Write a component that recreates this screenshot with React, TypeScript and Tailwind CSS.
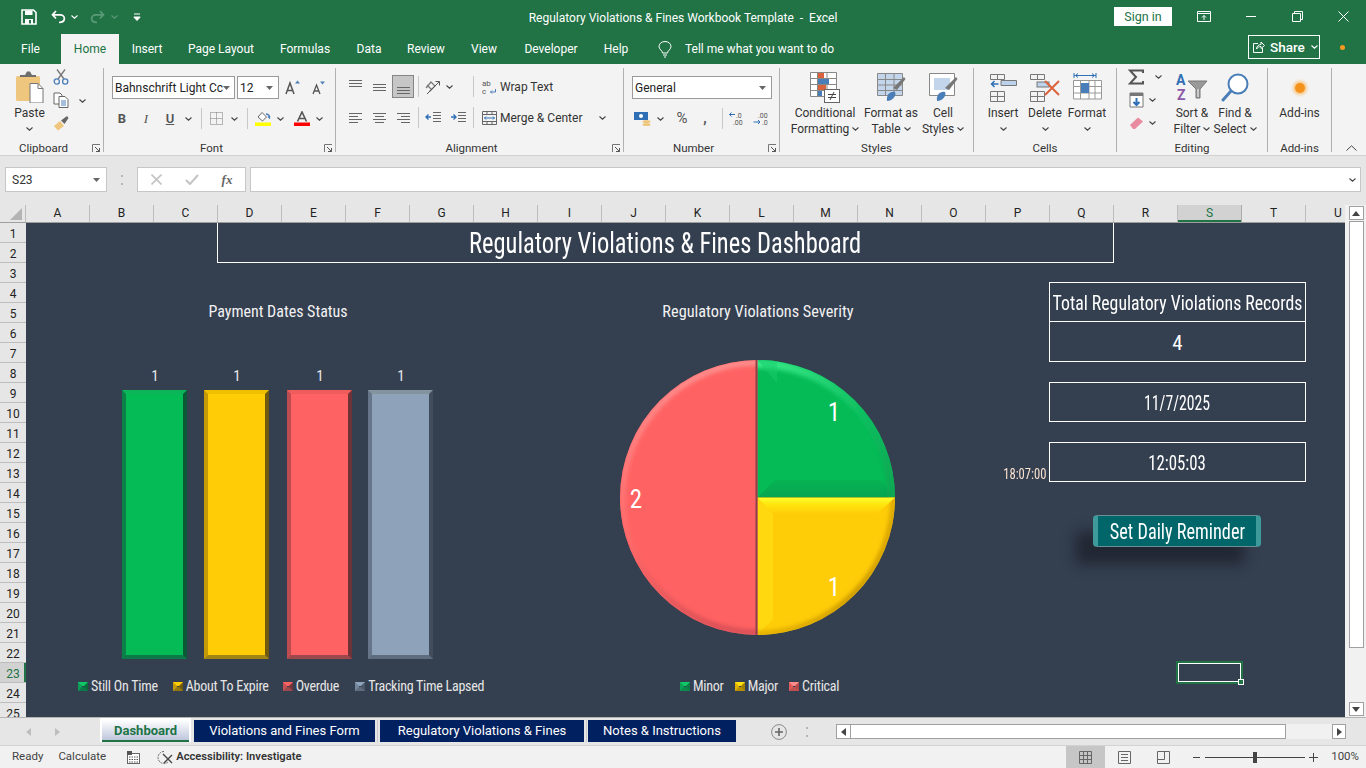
import type { ReactNode } from "react";

const chartFont = "font-['Roboto',sans-serif] [font-stretch:75%]";

const columns = "ABCDEFGHIJKLMNOPQRSTU".split("");
const rows = Array.from({ length: 25 }, (_, i) => i + 1);

const bars = [
  { bevel: "border-t-[#0cb55a] border-l-[#0b8048] border-r-[#0a5a36] border-b-[#0c7a47]", fill: "bg-[#05bb55]", gap: "ml-0" },
  { bevel: "border-t-[#f0c000] border-l-[#c49a06] border-r-[#6f5a10] border-b-[#a08414]", fill: "bg-[#ffcc05]", gap: "ml-[17px]" },
  { bevel: "border-t-[#f05c5c] border-l-[#bc4c50] border-r-[#6e3338] border-b-[#9c484c]", fill: "bg-[#ff6262]", gap: "ml-[18px]" },
  { bevel: "border-t-[#84949f] border-l-[#66758a] border-r-[#414d5c] border-b-[#5f6c7e]", fill: "bg-[#8ea2ba]", gap: "ml-[16px]" },
];

const barLegend = [
  { label: "Still On Time", marker: "border-t-[#10c868] border-l-[#0e9a58] border-r-[#0a6a3c] border-b-[#0b7a48]", gap: "mr-[15px]" },
  { label: "About To Expire", marker: "border-t-[#ffcc05] border-l-[#c49a06] border-r-[#6f5a10] border-b-[#94780f]", gap: "mr-[14px]" },
  { label: "Overdue", marker: "border-t-[#ff6262] border-l-[#c45056] border-r-[#70343a] border-b-[#9c484c]", gap: "mr-[16px]" },
  { label: "Tracking Time Lapsed", marker: "border-t-[#8ea2ba] border-l-[#748499] border-r-[#4a5666] border-b-[#5f6c7e]", gap: "mr-0" },
];

const pieLegend = [
  { label: "Minor", marker: "border-t-[#10c868] border-l-[#0ca055] border-r-[#0a7a44] border-b-[#0a8a4c]", gap: "mr-[11px]" },
  { label: "Major", marker: "border-t-[#ffe010] border-l-[#e0b000] border-r-[#a08000] border-b-[#b89000]", gap: "mr-[11px]" },
  { label: "Critical", marker: "border-t-[#ff8a8a] border-l-[#e05a5a] border-r-[#b04a4a] border-b-[#c05050]", gap: "mr-0" },
];

function Chev({ color = "#444" }: { color?: string }) {
  return (
    <svg width="7" height="4" viewBox="0 0 7 4" className="block shrink-0">
      <path d="M0.5 0.5 L3.5 3.2 L6.5 0.5" fill="none" stroke={color} strokeWidth="1.1" />
    </svg>
  );
}

function ComboArrow() {
  return (
    <svg width="7" height="4" viewBox="0 0 7 4" className="block shrink-0">
      <path d="M0 0 H7 L3.5 4 Z" fill="#666" />
    </svg>
  );
}

function Launcher() {
  return (
    <svg width="9" height="9" viewBox="0 0 9 9" className="absolute right-[2px] bottom-[-1px]">
      <path d="M0.5 8 V0.5 H8" fill="none" stroke="#777" />
      <path d="M3 3 L7.5 7.5 M7.5 4 V7.5 H4" fill="none" stroke="#555" />
    </svg>
  );
}

function VSep() {
  return <span className="block w-px h-[21px] bg-[#c8c8c8] shrink-0" />;
}

function Lines({ kind }: { kind: "left" | "center" | "right" }) {
  const short = kind === "left" ? "M1 5.5 H10 M1 11.5 H10" : kind === "center" ? "M3 5.5 H12 M3 11.5 H12" : "M5 5.5 H14 M5 11.5 H14";
  return (
    <svg width="15" height="14" viewBox="0 0 15 14" className="block">
      <path d={`M1 2.5 H14 M1 8.5 H14 ${short}`} stroke="#666" fill="none" />
    </svg>
  );
}

function Group({ w, label, labelPad = "", launcher, children }: { w: string; label: string; labelPad?: string; launcher?: boolean; children: ReactNode }) {
  return (
    <div className={`relative h-[84px] shrink-0 border-r border-[#b1b1b1] ${w}`}>
      <div className="h-[73px] flex flex-col">{children}</div>
      <div className={`text-center h-[14px] leading-[14px] text-[11.5px] text-[#333] ${labelPad}`}>{label}</div>
      {launcher && <Launcher />}
    </div>
  );
}

function LargeBtn({ w, icon, lines, chev }: { w: string; icon: ReactNode; lines: string[]; chev?: "inline" | "below" }) {
  return (
    <div className={`flex flex-col items-center shrink-0 ${w}`}>
      <div className="h-[37px] flex items-center justify-center pt-[2px]">{icon}</div>
      {lines.map((l, i) => (
        <div key={l} className="h-[16px] leading-[16px] flex items-center gap-[3px] whitespace-nowrap">
          {l}
          {chev === "inline" && i === lines.length - 1 && <Chev />}
        </div>
      ))}
      {chev === "below" && (
        <div className="h-[16px] flex items-center">
          <Chev />
        </div>
      )}
    </div>
  );
}

function Combo({ w, text }: { w: string; text: string }) {
  return (
    <div className={`h-[23px] bg-white border border-[#9a9a9a] flex items-center pl-[2px] pr-[5px] shrink-0 ${w}`}>
      <span className="flex-1 whitespace-nowrap text-[12px] text-[#222]">{text}</span>
      <ComboArrow />
    </div>
  );
}

function Marker({ colors }: { colors: string }) {
  return <span className={`block w-[10px] h-[9px] border-[4px] shrink-0 ${colors}`} />;
}

function PieChart() {
  const green = "M138.5 138.5 L138.5 1 A137.5 137.5 0 0 1 276 138.5 Z";
  const yellow = "M138.5 138.5 L276 138.5 A137.5 137.5 0 0 1 138.5 276 Z";
  const red = "M138.5 138.5 L138.5 276 A137.5 137.5 0 0 1 138.5 1 Z";
  return (
    <svg width="277" height="277" viewBox="0 0 277 277" className="block shrink-0">
      <defs>
        <clipPath id="cg"><path d={green} /></clipPath>
        <clipPath id="cy"><path d={yellow} /></clipPath>
        <clipPath id="cr"><path d={red} /></clipPath>
        <filter id="soft" x="-10%" y="-10%" width="120%" height="120%"><feGaussianBlur stdDeviation="2" /></filter>
        <linearGradient id="ga" gradientUnits="userSpaceOnUse" x1="150" y1="0" x2="276" y2="130">
          <stop offset="0" stopColor="#38ea88" />
          <stop offset="0.55" stopColor="#10c062" />
          <stop offset="1" stopColor="#08a652" />
        </linearGradient>
        <linearGradient id="gb" x1="0" y1="0" x2="0" y2="1">
          <stop offset="0" stopColor="#06b454" />
          <stop offset="1" stopColor="#07a450" />
        </linearGradient>
        <linearGradient id="ya" gradientUnits="userSpaceOnUse" x1="276" y1="138" x2="138" y2="276">
          <stop offset="0" stopColor="#d9a400" />
          <stop offset="0.5" stopColor="#c49200" />
          <stop offset="1" stopColor="#e2ae00" />
        </linearGradient>
        <linearGradient id="yb" x1="0" y1="0" x2="0" y2="1">
          <stop offset="0" stopColor="#ffff2c" />
          <stop offset="0.45" stopColor="#ffe40c" />
          <stop offset="1" stopColor="#ffcc08" />
        </linearGradient>
        <linearGradient id="ra" gradientUnits="userSpaceOnUse" x1="40" y1="20" x2="80" y2="270">
          <stop offset="0" stopColor="#ff9090" />
          <stop offset="0.6" stopColor="#ff6a6a" />
          <stop offset="1" stopColor="#d85056" />
        </linearGradient>
      </defs>
      <path d={green} fill="#05bb55" />
      <g clipPath="url(#cg)">
        <polygon points="138.5,138.5 156,121 262,121 276,138.5" fill="url(#gb)" />
        <circle cx="138.5" cy="138.5" r="134" fill="none" stroke="url(#ga)" strokeWidth="9" filter="url(#soft)" />
        <polygon points="138.5,1 158,1 158,24 156,22" fill="#18cc6c" opacity="0.5" />
      </g>
      <path d={yellow} fill="#ffcc08" />
      <g clipPath="url(#cy)">
        <polygon points="138.5,138.5 154,155 154,260 138.5,276" fill="#ffd810" />
        <circle cx="138.5" cy="138.5" r="136" fill="none" stroke="url(#ya)" strokeWidth="5" filter="url(#soft)" />
        <polygon points="138.5,138.5 276,138.5 258,155 154,155" fill="url(#yb)" />
      </g>
      <path d={red} fill="#ff6262" />
      <g clipPath="url(#cr)">
        <circle cx="138.5" cy="138.5" r="135" fill="none" stroke="url(#ra)" strokeWidth="6" filter="url(#soft)" />
        <rect x="136.5" y="0" width="2" height="277" fill="#8e4048" />
      </g>
      <g fill="#fff" fontSize="25" textAnchor="middle">
        <text x="215" y="62">1</text>
        <text x="215" y="237">1</text>
        <text x="17" y="149">2</text>
      </g>
    </svg>
  );
}

function TitleBar() {
  return (
    <div className="h-[33px] grid grid-cols-[1fr_auto_1fr] items-center text-white">
      <div className="flex items-center pl-[21px]">
        <svg width="16" height="16" viewBox="0 0 16 16" className="block">
          <path d="M1 1 H12.5 L15 3.5 V15 H1 Z" fill="none" stroke="#fff" strokeWidth="1.6" />
          <rect x="4" y="1.5" width="7.5" height="4.5" fill="#fff" />
          <rect x="4" y="10" width="8" height="5" fill="#fff" />
          <rect x="8" y="11" width="2" height="3.4" fill="#217346" />
        </svg>
        <svg width="15" height="14" viewBox="0 0 15 14" className="block ml-[14px]">
          <path d="M5 1 L1.5 4.8 L5 8.5 M2 4.8 H9 C15 4.8 15 12.5 8 12.5" fill="none" stroke="#fff" strokeWidth="1.7" />
        </svg>
        <span className="ml-[5px]"><Chev color="#fff" /></span>
        <svg width="15" height="14" viewBox="0 0 15 14" className="block ml-[12px]">
          <path d="M10 1 L13.5 4.8 L10 8.5 M13 4.8 H6 C0 4.8 0 12.5 7 12.5" fill="none" stroke="#5b9a78" strokeWidth="1.7" />
        </svg>
        <span className="ml-[6px]"><Chev color="#5b9a78" /></span>
        <svg width="8" height="8" viewBox="0 0 8 8" className="block ml-[15px]">
          <path d="M1 1 H7 M0.8 4 H7.2 L4 7.5 Z" stroke="#fff" fill="#fff" strokeWidth="1" />
        </svg>
      </div>
      <div className="text-[12px] whitespace-pre pt-[2px]">Regulatory Violations &amp; Fines Workbook Template  -  Excel</div>
      <div className="flex items-center justify-end">
        <div className="w-[58px] h-[19px] bg-white text-[#217346] text-[12.5px] leading-[19px] text-center">Sign in</div>
        <div className="ml-[8px] w-[48px] flex justify-center">
          <svg width="14" height="11" viewBox="0 0 14 11" className="block">
            <path d="M0.5 0.5 H13.5 V10.5 H0.5 Z M0.5 2.5 H13.5" fill="none" stroke="#fff" />
            <path d="M7 9 V4.5 M5 6.5 L7 4.5 L9 6.5" fill="none" stroke="#fff" />
          </svg>
        </div>
        <div className="w-[46px] flex justify-center">
          <span className="block w-[10px] h-px bg-white" />
        </div>
        <div className="w-[46px] flex justify-center">
          <svg width="11" height="11" viewBox="0 0 11 11" className="block">
            <path d="M0.5 2.5 H8.5 V10.5 H0.5 Z M2.5 2.5 V0.5 H10.5 V8.5 H8.5" fill="none" stroke="#fff" />
          </svg>
        </div>
        <div className="w-[46px] flex justify-center">
          <svg width="11" height="11" viewBox="0 0 11 11" className="block">
            <path d="M0.5 0.5 L10.5 10.5 M10.5 0.5 L0.5 10.5" stroke="#fff" />
          </svg>
        </div>
      </div>
    </div>
  );
}

const tabs = [
  { label: "File", w: "w-[61px]" },
  { label: "Home", w: "w-[58px]", active: true },
  { label: "Insert", w: "w-[56px]" },
  { label: "Page Layout", w: "w-[92px]" },
  { label: "Formulas", w: "w-[76px]" },
  { label: "Data", w: "w-[52px]" },
  { label: "Review", w: "w-[62px]" },
  { label: "View", w: "w-[54px]" },
  { label: "Developer", w: "w-[80px]" },
  { label: "Help", w: "w-[50px]" },
];

function TabRow() {
  return (
    <div className="h-[31px] flex items-end text-white text-[12px]">
      {tabs.map((t) => (
        <div key={t.label} className={`h-[30px] leading-[30px] text-center shrink-0 ${t.w} ${t.active ? "bg-[#f3f3f3] text-[#217346]" : ""}`}>
          {t.label}
        </div>
      ))}
      <div className="h-[30px] flex items-center ml-[17px]">
        <svg width="14" height="17" viewBox="0 0 14 17" className="block">
          <path d="M4.5 12 C4.5 9.5 1 8.5 1 5.5 A6 5 0 0 1 13 5.5 C13 8.5 9.5 9.5 9.5 12 Z M5 14 H9 M6 16 H8" fill="none" stroke="#fff" />
        </svg>
        <span className="ml-[13px]">Tell me what you want to do</span>
      </div>
      <div className="ml-auto flex items-center h-[31px] pb-[3px]">
        <div className="w-[72px] h-[24px] border border-white flex items-center pl-[4px] text-[13.5px] font-medium">
          <svg width="12" height="12" viewBox="0 0 12 12" className="block shrink-0">
            <path d="M5 2.5 H0.5 V11.5 H9.5 V7 M3.5 8 C3.5 5 6 3.5 8 3.5 V1 L11.5 4.5 L8 7.5 V5.5 C6 5.5 4.5 6.5 3.5 8 Z" fill="none" stroke="#fff" />
          </svg>
          <span className="ml-[5px]">Share</span>
          <span className="ml-[6px]"><Chev color="#fff" /></span>
        </div>
        <span className="block ml-[20px] mr-[21px] w-[5px] h-[5px] rounded-full bg-[#f59a1c]" />
      </div>
    </div>
  );
}

function ClipboardGroup() {
  return (
    <Group w="w-[104px]" label="Clipboard" labelPad="pr-[16px]" launcher>
      <div className="flex">
        <div className="w-[53px] pl-[6px] flex flex-col items-center shrink-0">
          <svg width="29" height="32" viewBox="0 0 29 32" className="block mt-[3px]">
            <rect x="1" y="5" width="24" height="25" rx="1.5" fill="#efc67e" />
            <path d="M5 6 V4 H10 L12 0.5 H15 L17 4 H21 V6 Z" fill="#6e6e6e" />
            <path d="M15 12.5 H23 L28 17.5 V32 H15 Z" fill="#fff" stroke="#777" />
            <path d="M23 12.5 V17.5 H28" fill="none" stroke="#777" />
          </svg>
          <div className="h-[16px] leading-[16px] mt-[2px]">Paste</div>
          <div className="h-[15px] flex items-center"><Chev /></div>
        </div>
        <div className="w-[16px] flex flex-col items-center gap-[7px] pt-[1px] shrink-0">
          <svg width="16" height="16" viewBox="0 0 16 16" className="block">
            <path d="M4 0.5 L11 10 M12 0.5 L5 10" stroke="#777" strokeWidth="1.3" />
            <circle cx="3.8" cy="12.5" r="2.6" fill="none" stroke="#4a7eb8" strokeWidth="1.3" />
            <circle cx="12.2" cy="12.5" r="2.6" fill="none" stroke="#4a7eb8" strokeWidth="1.3" />
          </svg>
          <svg width="16" height="16" viewBox="0 0 16 16" className="block">
            <path d="M1 1 H7 L9 3 V12 H1 Z" fill="#fff" stroke="#666" />
            <path d="M6 4.5 H12 L15 7.5 V15.5 H6 Z" fill="#fff" stroke="#666" />
            <path d="M8 9 H13 M8 11 H13 M8 13 H13" stroke="#4a7eb8" />
          </svg>
          <svg width="16" height="16" viewBox="0 0 16 16" className="block">
            <path d="M1 11 L7 6 L11 11 L5 15.5 Z" fill="#efc67e" />
            <path d="M8 5.5 L14 1 L15.5 3 L11.5 9 Z" fill="#666" />
          </svg>
        </div>
        <div className="ml-[10px] mt-[31px]"><Chev /></div>
      </div>
    </Group>
  );
}

function FontGroup() {
  return (
    <Group w="w-[232px]" label="Font" labelPad="pr-[16px]" launcher>
      <div className="flex items-center pl-[8px] mt-[8px] h-[23px]">
        <Combo w="w-[123px]" text="Bahnschrift Light Cc" />
        <Combo w="w-[42px] ml-[2px]" text="12" />
        <div className="w-[27px] flex justify-center">
          <svg width="15" height="15" viewBox="0 0 15 15" className="block">
            <path d="M1 14 L5 3 L9 14 M2.5 10.5 H7.5" fill="none" stroke="#555" strokeWidth="1.5" />
            <path d="M10 3.5 L12.5 0.5 L15 3.5 Z" fill="#4a7eb8" />
          </svg>
        </div>
        <div className="w-[24px] flex justify-center">
          <svg width="13" height="14" viewBox="0 0 13 14" className="block">
            <path d="M1 13 L4.5 4 L8 13 M2.2 10 H6.8" fill="none" stroke="#555" strokeWidth="1.3" />
            <path d="M8 0.5 L10.5 3.5 L13 0.5 Z" fill="#4a7eb8" />
          </svg>
        </div>
      </div>
      <div className="flex items-center pl-[6px] mt-[8px] h-[23px] text-[#555] text-[13px]">
        <span className="w-[24px] text-center font-bold">B</span>
        <span className="w-[24px] text-center italic font-['Liberation_Serif',serif]">I</span>
        <span className="w-[24px] text-center underline font-semibold">U</span>
        <span className="w-[12px] flex justify-center"><Chev /></span>
        <span className="w-[14px] flex justify-center"><VSep /></span>
        <span className="w-[17px] flex justify-center">
          <svg width="13" height="13" viewBox="0 0 13 13" className="block">
            <path d="M0.5 0.5 H12.5 V12.5 H0.5 Z M6.5 0.5 V12.5 M0.5 6.5 H12.5" fill="none" stroke="#777" strokeDasharray="1 1" />
          </svg>
        </span>
        <span className="w-[18px] flex justify-center"><Chev /></span>
        <span className="w-[8px] flex justify-center"><VSep /></span>
        <span className="w-[24px] flex justify-center">
          <svg width="16" height="15" viewBox="0 0 16 15" className="block">
            <path d="M3 6 L7 1.5 L11.5 6 L7.5 10 Z" fill="#fff" stroke="#666" />
            <path d="M11 3 C14 3.5 15 5 14.5 7 L13 5.5" fill="none" stroke="#4a7eb8" strokeWidth="1.3" />
            <rect x="0" y="11.5" width="16" height="3.5" fill="#ffff00" />
          </svg>
        </span>
        <span className="w-[10px] flex justify-center"><Chev /></span>
        <span className="ml-[6px] w-[22px] flex justify-center">
          <svg width="16" height="15" viewBox="0 0 16 15" className="block">
            <path d="M3.5 10.5 L8 1 L12.5 10.5 M5 7.5 H11" fill="none" stroke="#555" strokeWidth="1.6" />
            <rect x="0" y="11.5" width="16" height="3.5" fill="#ff0000" />
          </svg>
        </span>
        <span className="w-[12px] flex justify-center"><Chev /></span>
      </div>
    </Group>
  );
}

function AlignmentGroup() {
  return (
    <Group w="w-[288px]" label="Alignment" labelPad="pr-[16px]" launcher>
      <div className="flex items-center pl-[7px] mt-[7px] h-[23px]">
        <span className="w-[24px] flex justify-center">
          <svg width="15" height="8" viewBox="0 0 15 8" className="block mb-[8px]"><path d="M1 1.5 H14 M1 4.5 H14 M1 7.5 H14" stroke="#666" /></svg>
        </span>
        <span className="w-[24px] flex justify-center">
          <svg width="15" height="8" viewBox="0 0 15 8" className="block"><path d="M1 1.5 H14 M1 4.5 H14 M1 7.5 H14" stroke="#666" /></svg>
        </span>
        <span className="w-[22px] ml-[1px] mr-[1px] h-[23px] flex justify-center items-end pb-[3px] bg-[#c6c6c6] border border-[#858585]">
          <svg width="15" height="8" viewBox="0 0 15 8" className="block"><path d="M1 1.5 H14 M1 4.5 H14 M1 7.5 H14" stroke="#666" /></svg>
        </span>
        <span className="w-[6px] flex justify-center"><VSep /></span>
        <span className="w-[23px] flex justify-center">
          <svg width="17" height="16" viewBox="0 0 17 16" className="block">
            <path d="M2 9 L7 3 L11 7 L5.5 12.5 M3 6 L8 11" fill="none" stroke="#777" strokeWidth="1.2" />
            <path d="M3 15 L15 3 M11.5 2.5 H15.5 V6.5" fill="none" stroke="#555" />
          </svg>
        </span>
        <span className="w-[10px] flex justify-center"><Chev /></span>
        <span className="ml-[19px]"><VSep /></span>
        <span className="ml-[8px] w-[15px] flex justify-center">
          <svg width="15" height="16" viewBox="0 0 15 16" className="block">
            <text x="0" y="7" fontSize="8" fill="#555">ab</text>
            <text x="0" y="15" fontSize="8" fill="#555">c</text>
            <path d="M13.5 10 V13 H8.5 M10 11.5 L8.5 13 L10 14.5" fill="none" stroke="#4a7eb8" />
          </svg>
        </span>
        <span className="ml-[3px] whitespace-nowrap">Wrap Text</span>
      </div>
      <div className="flex items-center pl-[7px] mt-[8px] h-[23px]">
        <span className="w-[24px] flex justify-center"><Lines kind="left" /></span>
        <span className="w-[24px] flex justify-center"><Lines kind="center" /></span>
        <span className="w-[24px] flex justify-center"><Lines kind="right" /></span>
        <span className="w-[6px] flex justify-center"><VSep /></span>
        <span className="w-[24px] flex justify-center">
          <svg width="16" height="13" viewBox="0 0 16 13" className="block">
            <path d="M8 1.5 H16 M8 4.5 H16 M8 7.5 H16 M8 10.5 H16" stroke="#666" />
            <path d="M6 6 H1 M3.5 3.5 L1 6 L3.5 8.5" fill="none" stroke="#2f6fb5" strokeWidth="1.4" />
          </svg>
        </span>
        <span className="w-[25px] flex justify-center">
          <svg width="16" height="13" viewBox="0 0 16 13" className="block">
            <path d="M8 1.5 H16 M8 4.5 H16 M8 7.5 H16 M8 10.5 H16" stroke="#666" />
            <path d="M1 6 H6 M3.5 3.5 L6 6 L3.5 8.5" fill="none" stroke="#2f6fb5" strokeWidth="1.4" />
          </svg>
        </span>
        <span className="ml-[3px]"><VSep /></span>
        <span className="ml-[7px] w-[16px] flex justify-center">
          <svg width="15" height="14" viewBox="0 0 15 14" className="block">
            <path d="M0.5 0.5 H14.5 V13.5 H0.5 Z M0.5 3.5 H14.5 M0.5 10.5 H14.5 M5 0.5 V3.5 M10 0.5 V3.5 M5 10.5 V13.5 M10 10.5 V13.5" fill="none" stroke="#666" />
            <path d="M2.5 7 H12.5 M4 5.5 L2.5 7 L4 8.5 M11 5.5 L12.5 7 L11 8.5" fill="none" stroke="#2f6fb5" />
          </svg>
        </span>
        <span className="ml-[3px] w-[85px] whitespace-nowrap">Merge &amp; Center</span>
        <span className="ml-[14px]"><Chev /></span>
      </div>
    </Group>
  );
}

function NumberGroup() {
  return (
    <Group w="w-[156px]" label="Number" labelPad="pr-[16px]" launcher>
      <div className="flex items-center pl-[8px] mt-[8px] h-[23px]">
        <Combo w="w-[140px]" text="General" />
      </div>
      <div className="flex items-center pl-[8px] mt-[8px] h-[23px] text-[#555]">
        <span className="w-[20px] flex justify-center">
          <svg width="17" height="16" viewBox="0 0 17 16" className="block">
            <rect x="0" y="1" width="14" height="8" fill="#2f6fb5" />
            <circle cx="7" cy="5" r="2" fill="#fff" />
            <ellipse cx="12.5" cy="10.5" rx="4" ry="1.6" fill="#efc67e" />
            <ellipse cx="12.5" cy="13.5" rx="4" ry="1.6" fill="#efc67e" />
          </svg>
        </span>
        <span className="w-[16px] flex justify-center"><Chev /></span>
        <span className="ml-[2px] w-[24px] text-center text-[15px]">%</span>
        <span className="w-[22px] text-center text-[14px] font-bold">,</span>
        <span className="ml-[6px]"><VSep /></span>
        <span className="ml-[5px] w-[18px] flex justify-center">
          <svg width="16" height="15" viewBox="0 0 16 15" className="block">
            <text x="7" y="6.5" fontSize="7" fill="#555">.0</text>
            <text x="4" y="14" fontSize="7" fill="#555">.00</text>
            <path d="M6 3.5 H0.5 M2.5 1.5 L0.5 3.5 L2.5 5.5" fill="none" stroke="#2f6fb5" />
          </svg>
        </span>
        <span className="ml-[6px] w-[18px] flex justify-center">
          <svg width="16" height="15" viewBox="0 0 16 15" className="block">
            <text x="5" y="6.5" fontSize="7" fill="#555">.00</text>
            <text x="9" y="14" fontSize="7" fill="#555">.0</text>
            <path d="M0.5 11 H7 M5 9 L7 11 L5 13" fill="none" stroke="#2f6fb5" />
          </svg>
        </span>
      </div>
    </Group>
  );
}

function StylesGroup() {
  return (
    <Group w="w-[194px]" label="Styles">
      <div className="flex pl-[7px]">
        <LargeBtn
          w="w-[76px]"
          chev="inline"
          lines={["Conditional", "Formatting"]}
          icon={
            <svg width="30" height="31" viewBox="0 0 30 31" className="block">
              <path d="M0.5 0.5 H26.5 V24.5 H0.5 Z M0.5 6.5 H26.5 M0.5 12.5 H26.5 M0.5 18.5 H26.5 M7.5 0.5 V24.5 M17 0.5 V24.5" fill="#fff" stroke="#888" />
              <rect x="8" y="1" width="6" height="5" fill="#d9623c" />
              <rect x="8" y="7" width="11" height="5" fill="#4a7eb8" />
              <rect x="8" y="13" width="8" height="5" fill="#d9623c" />
              <rect x="8" y="19" width="4" height="5" fill="#4a7eb8" />
              <rect x="14.5" y="17.5" width="15" height="13" fill="#fff" stroke="#666" />
              <path d="M18 22.5 H26 M18 25.5 H26 M24 20 L20 28" stroke="#444" fill="none" />
            </svg>
          }
        />
        <LargeBtn
          w="w-[56px]"
          chev="inline"
          lines={["Format as", "Table"]}
          icon={
            <svg width="29" height="29" viewBox="0 0 29 29" className="block">
              <path d="M0.5 0.5 H25.5 V22.5 H0.5 Z M0.5 6.5 H25.5 M0.5 12 H25.5 M0.5 17.5 H25.5 M8.5 0.5 V22.5 M17 0.5 V22.5" fill="#c3d5ea" stroke="#888" />
              <path d="M28.5 6 L20 17 L16 15 L27 4 Z" fill="#777" />
              <path d="M10 28 C9 22 13 18 18 19 C20 23 15 28 10 28 Z" fill="#4a7eb8" />
            </svg>
          }
        />
        <LargeBtn
          w="w-[48px]"
          chev="inline"
          lines={["Cell", "Styles"]}
          icon={
            <svg width="29" height="29" viewBox="0 0 29 29" className="block">
              <path d="M0.5 0.5 H25.5 V22.5 H0.5 Z" fill="#fff" stroke="#888" />
              <rect x="5" y="5" width="16" height="12" fill="#c3d5ea" />
              <path d="M28.5 6 L20 17 L16 15 L27 4 Z" fill="#777" />
              <path d="M8 28 C7 22 11 18 16 19 C18 23 13 28 8 28 Z" fill="#4a7eb8" />
            </svg>
          }
        />
      </div>
    </Group>
  );
}

function CellsGroup() {
  return (
    <Group w="w-[143px]" label="Cells">
      <div className="flex pl-[8px]">
        <LargeBtn
          w="w-[42px]"
          chev="below"
          lines={["Insert"]}
          icon={
            <svg width="27" height="28" viewBox="0 0 27 28" className="block">
              <path d="M0.5 0.5 H14.5 V5.5 H0.5 Z M7.5 0.5 V5.5 M0.5 17.5 H14.5 V27.5 H0.5 Z M7.5 17.5 V27.5 M0.5 22.5 H14.5" fill="none" stroke="#777" />
              <path d="M11 11.5 H26.5 V6.5 H11 Z" fill="#bcd2ea" stroke="#777" />
              <path d="M8.5 10 H1.5 M4.5 7 L1.5 10 L4.5 13" fill="none" stroke="#2f6fb5" strokeWidth="1.5" />
            </svg>
          }
        />
        <LargeBtn
          w="w-[42px]"
          chev="below"
          lines={["Delete"]}
          icon={
            <svg width="30" height="28" viewBox="0 0 30 28" className="block">
              <path d="M0.5 0.5 H14.5 V5.5 H0.5 Z M7.5 0.5 V5.5 M0.5 17.5 H14.5 V27.5 H0.5 Z M7.5 17.5 V27.5 M0.5 22.5 H14.5" fill="none" stroke="#777" />
              <rect x="7" y="8" width="12" height="5" fill="#bcd2ea" stroke="#777" />
              <path d="M15 7 L29 21 M29 7 L15 21" stroke="#d9623c" strokeWidth="2" />
            </svg>
          }
        />
        <LargeBtn
          w="w-[42px]"
          chev="below"
          lines={["Format"]}
          icon={
            <svg width="29" height="31" viewBox="0 0 29 31" className="block">
              <path d="M1 3.5 H23 M1 1 V6 M23 1 V6 M2.5 3.5 L5 1.5 M2.5 3.5 L5 5.5 M21.5 3.5 L19 1.5 M21.5 3.5 L19 5.5" fill="none" stroke="#2f6fb5" />
              <path d="M0.5 8.5 H28.5 V27 H0.5 Z M0.5 14.5 H28.5 M0.5 21 H28.5 M7.5 8.5 V27 M16 8.5 V27 M22 8.5 V27" fill="#fff" stroke="#999" />
              <rect x="8" y="11" width="8" height="10" fill="#4a7eb8" />
            </svg>
          }
        />
      </div>
    </Group>
  );
}

function EditingGroup() {
  return (
    <Group w="w-[151px]" label="Editing">
      <div className="flex pl-[8px]">
        <div className="w-[45px] flex flex-col shrink-0 pt-[1px] gap-[7px]">
          <div className="h-[16px] flex items-center">
            <svg width="22" height="16" viewBox="0 0 22 16" className="block shrink-0">
              <path d="M18 4 V1.5 H5 L11 8 L5 14.5 H18 V12" fill="none" stroke="#555" strokeWidth="2" />
            </svg>
            <span className="ml-[8px]"><Chev /></span>
          </div>
          <div className="h-[16px] flex items-center">
            <svg width="22" height="16" viewBox="0 0 22 16" className="block shrink-0">
              <path d="M5 1 H18 V15 H5 Z" fill="#fff" stroke="#777" />
              <rect x="5" y="1" width="13" height="3" fill="#777" />
              <path d="M11.5 6 V13 M8.5 10 L11.5 13 L14.5 10" fill="none" stroke="#2f6fb5" strokeWidth="2" />
            </svg>
            <span className="ml-[2px]"><Chev /></span>
          </div>
          <div className="h-[16px] flex items-center">
            <svg width="22" height="16" viewBox="0 0 22 16" className="block shrink-0">
              <path d="M5 10 L13 2.5 L18 6.5 L10 14 H8 Z" fill="#e98aa0" />
            </svg>
            <span className="ml-[2px]"><Chev /></span>
          </div>
        </div>
        <LargeBtn
          w="w-[44px]"
          chev="inline"
          lines={["Sort &", "Filter"]}
          icon={
            <svg width="32" height="29" viewBox="0 0 32 29" className="block overflow-visible">
              <text x="0" y="12" fontSize="14" fontWeight="700" fill="#2f6fb5">A</text>
              <text x="1" y="27" fontSize="14" fontWeight="700" fill="#8a5aa8">Z</text>
              <path d="M12 8 H31 L24 16 V25 H20 V16 Z" fill="#999" stroke="#777" />
              <path d="M22 16 V24" stroke="#fff" />
            </svg>
          }
        />
        <LargeBtn
          w="w-[42px]"
          chev="inline"
          lines={["Find &", "Select"]}
          icon={
            <svg width="28" height="29" viewBox="0 0 28 29" className="block">
              <circle cx="17" cy="11" r="9.5" fill="#fff" stroke="#4a7eb8" strokeWidth="2" />
              <path d="M10 18 L2 27" stroke="#4a7eb8" strokeWidth="3" strokeLinecap="round" />
            </svg>
          }
        />
      </div>
    </Group>
  );
}

function Ribbon() {
  return (
    <div className="relative h-[92px] bg-[#f3f3f3] border-b border-[#d2d2d2] flex pt-[4px] text-[12px] text-[#333]">
      <ClipboardGroup />
      <FontGroup />
      <AlignmentGroup />
      <NumberGroup />
      <StylesGroup />
      <CellsGroup />
      <EditingGroup />
      <Group w="w-[64px]" label="Add-ins">
        <LargeBtn
          w="w-full"
          lines={["Add-ins"]}
          icon={<span className="block w-[10px] h-[10px] rounded-full bg-[#f5921c] shadow-[0_0_3px_2px_rgba(250,170,60,0.6)]" />}
        />
      </Group>
      <svg width="11" height="6" viewBox="0 0 11 6" className="absolute right-[9px] bottom-[4px]">
        <path d="M0.5 5.5 L5.5 0.8 L10.5 5.5" fill="none" stroke="#444" />
      </svg>
    </div>
  );
}

function FormulaBar() {
  return (
    <div className="h-[49px] bg-[#e6e6e6] flex items-start pt-[11px] pl-[5px] text-[12px] text-[#333]">
      <div className="w-[102px] h-[25px] bg-white border border-[#c6c6c6] flex items-center pl-[6px] pr-[6px] shrink-0">
        <span className="flex-1">S23</span>
        <ComboArrow />
      </div>
      <div className="w-[30px] h-[25px] flex justify-center items-center shrink-0">
        <span className="block w-[2px] h-[10px] border-y-2 border-[#b5b5b5]" />
      </div>
      <div className="w-[109px] h-[25px] bg-white border border-[#c6c6c6] flex items-center shrink-0">
        <span className="w-[36px] flex justify-center">
          <svg width="11" height="11" viewBox="0 0 11 11" className="block"><path d="M0.5 0.5 L10.5 10.5 M10.5 0.5 L0.5 10.5" stroke="#c4c4c4" strokeWidth="1.6" /></svg>
        </span>
        <span className="w-[36px] flex justify-center">
          <svg width="14" height="11" viewBox="0 0 14 11" className="block"><path d="M1 6 L5 10 L13 1" fill="none" stroke="#c4c4c4" strokeWidth="2" /></svg>
        </span>
        <span className="w-[34px] text-center italic font-bold text-[13px] text-[#666] font-['Liberation_Serif',serif]">fx</span>
      </div>
      <div className="ml-[4px] w-[1111px] h-[25px] bg-white border border-[#c6c6c6] flex items-center justify-end pr-[4px] shrink-0">
        <Chev />
      </div>
    </div>
  );
}

function ColumnHeaders() {
  return (
    <div className="h-[18px] flex bg-[#e6e6e6] border-b border-[#9e9e9e]">
      <div className="w-[26px] shrink-0 flex items-end justify-end pr-[3px] pb-[2px] border-r border-[#bdbdbd]">
        <svg width="12" height="12" viewBox="0 0 12 12" className="block"><path d="M12 0 V12 H0 Z" fill="#b4b4b4" /></svg>
      </div>
      {columns.map((c) => (
        <div
          key={c}
          className={`w-[64px] shrink-0 text-center leading-[16px] border-r ${c === "S" ? "bg-[#d2d2d2] border-[#ababab] text-[#217346] shadow-[inset_0_-2px_0_#217346]" : "border-[#bdbdbd]"} ${c === "U" ? "border-r-0" : ""}`}
        >
          {c}
        </div>
      ))}
    </div>
  );
}

function RowHeaders() {
  return (
    <div className="w-[26px] shrink-0 bg-[#e6e6e6] overflow-hidden">
      {rows.map((r) => (
        <div
          key={r}
          className={`h-[20px] leading-[22px] text-center border-b border-[#bdbdbd] ${r === 23 ? "bg-[#d2d2d2] text-[#217346] shadow-[inset_-2px_0_0_#217346]" : ""}`}
        >
          {r}
        </div>
      ))}
    </div>
  );
}

function Sheet() {
  return (
    <div className={`flex-1 min-w-0 bg-[#343f50] overflow-hidden grid grid-cols-[repeat(21,64px)] grid-rows-[repeat(25,20px)] text-white ${chartFont}`}>
      {/* title, merged D1:Q2 */}
      <div className="col-[4/18] row-[1/3] -ml-px border-x border-b border-white flex items-center justify-center pt-px text-[29px] leading-none whitespace-nowrap">
        <span className="inline-block scale-x-[0.845]">Regulatory Violations &amp; Fines Dashboard</span>
      </div>

      {/* payment status bars */}
      <div className="col-[1/9] row-[5/25] flex flex-col">
        <div className="h-[16px] leading-[18px] pr-[8px] text-center text-[16px] text-[#f2f2f2]">Payment Dates Status</div>
        <div className="mt-[49px] pl-[96px] flex">
          {bars.map((b, i) => (
            <div key={i} className={`w-[65px] flex flex-col items-center shrink-0 ${b.gap}`}>
              <div className="h-[22px] pl-px text-[15px] leading-[16px] text-[#e8e8e8]">1</div>
              <div className={`w-[65px] h-[269px] border-[4px] ${b.bevel} ${b.fill}`} />
            </div>
          ))}
        </div>
        <div className="mt-[19px] h-[16px] pl-[52px] flex items-center text-[14px] tracking-[-0.25px] text-[#e6e6e6] whitespace-nowrap">
          {barLegend.map((l) => (
            <div key={l.label} className={`flex items-center gap-[3px] ${l.gap}`}>
              <Marker colors={l.marker} />
              {l.label}
            </div>
          ))}
        </div>
      </div>

      {/* severity pie */}
      <div className="col-[9/16] row-[5/25] flex flex-col">
        <div className="h-[16px] leading-[18px] pr-[8px] text-center text-[16.3px] text-[#f2f2f2]">Regulatory Violations Severity</div>
        <div className="mt-[40px] pl-[81px]">
          <PieChart />
        </div>
        <div className="mt-[42px] h-[16px] pl-[142px] flex items-center text-[14px] tracking-[-0.25px] text-[#e6e6e6] whitespace-nowrap">
          {pieLegend.map((l) => (
            <div key={l.label} className={`flex items-center gap-[3px] ${l.gap}`}>
              <Marker colors={l.marker} />
              {l.label}
            </div>
          ))}
        </div>
      </div>

      {/* info boxes */}
      <div className="col-[17/21] row-[4/6] -ml-px -mt-px mb-px pt-[4px] border border-white flex items-center justify-center text-[21px] whitespace-nowrap">
        <span className="inline-block scale-x-[0.847]">Total Regulatory Violations Records</span>
      </div>
      <div className="col-[17/21] row-[6/8] -ml-px -mt-px mb-px pt-[4px] border-x border-b border-white flex items-center justify-center text-[21px]">4</div>
      <div className="col-[17/21] row-[9/11] -ml-px -mt-px mb-px pt-[4px] border border-white flex items-center justify-center text-[21px]">
        <span className="inline-block scale-x-[0.75]">11/7/2025</span>
      </div>
      <div className="col-[16] row-[13] flex items-end justify-end pr-[4px] text-[15px] leading-[18px] text-[#fce4d0]">
        <span className="inline-block origin-right scale-x-[0.84]">18:07:00</span>
      </div>
      <div className="col-[17/21] row-[12/14] -ml-px -mt-px mb-px pt-[4px] border border-white flex items-center justify-center text-[21px]">
        <span className="inline-block scale-x-[0.8]">12:05:03</span>
      </div>

      <div className="col-[17/21] row-[15/18] flex justify-center items-start pt-[12px] pr-[2px]">
        <div className="relative w-[168px] h-[32px] rounded-[4px] bg-[#00666a] border border-[#6c8f96] border-x-[5px] border-x-[#3f9a9c] flex justify-center text-[22px] leading-[31px] whitespace-nowrap text-white shadow-[-17px_17px_13px_rgba(30,34,44,0.8)]">
          <span className="inline-block shrink-0 scale-x-[0.83]">Set Daily Reminder</span>
        </div>
      </div>

      {/* selected cell */}
      <div className="col-[19] row-[23] relative -ml-[2px] -mr-px -mt-[2px] -mb-px border-2 border-[#217346]">
        <div className="h-full border border-white" />
        <span className="absolute right-[-3px] bottom-[-3px] w-[6px] h-[6px] bg-[#217346] border border-white" />
      </div>
    </div>
  );
}

function ScrollButton({ up }: { up?: boolean }) {
  return (
    <div className="w-[15px] h-[14px] bg-white border border-[#a0a0a0] flex items-center justify-center shrink-0">
      <svg width="8" height="5" viewBox="0 0 8 5" className="block">
        <path d={up ? "M0 5 H8 L4 0 Z" : "M0 0 H8 L4 5 Z"} fill="#444" />
      </svg>
    </div>
  );
}

function VScroll() {
  return (
    <div className="w-[21px] shrink-0 bg-[#f1f1f1] flex flex-col items-center pl-[1px] pt-px pb-px">
      <ScrollButton up />
      <div className="w-[15px] h-[427px] mt-[1px] bg-white border border-[#a0a0a0]" />
      <div className="flex-1" />
      <ScrollButton />
    </div>
  );
}

function SheetTabs() {
  return (
    <div className="h-[28px] bg-[#e6e6e6] border-t border-[#b4b4b4] flex items-start text-[13px]">
      <div className="w-[100px] h-full flex items-center pl-[26px] gap-[24px] shrink-0">
        <svg width="5" height="8" viewBox="0 0 5 8" className="block"><path d="M5 0 V8 L0 4 Z" fill="#bdbdbd" /></svg>
        <svg width="5" height="8" viewBox="0 0 5 8" className="block"><path d="M0 0 V8 L5 4 Z" fill="#bdbdbd" /></svg>
      </div>
      <div className="w-[91px] h-[24px] border-2 border-white border-b-0 bg-gradient-to-b from-white to-[#b9c1d8] shadow-[inset_0_-2px_0_#217346] text-center font-bold text-[#217346] leading-[22px] shrink-0">
        Dashboard
      </div>
      <div className="ml-[3px] mt-[2px] w-[181px] h-[22px] bg-[#002060] text-white text-center leading-[22px] shrink-0">Violations and Fines Form</div>
      <span className="block w-px h-[22px] mt-[2px] ml-[2px] mr-[2px] bg-[#c8c8c8]" />
      <div className="mt-[2px] w-[204px] h-[22px] bg-[#002060] text-white text-center leading-[22px] shrink-0">Regulatory Violations &amp; Fines</div>
      <span className="block w-px h-[22px] mt-[2px] ml-[2px] mr-px bg-[#c8c8c8]" />
      <div className="mt-[2px] w-[148px] h-[22px] bg-[#002060] text-white text-center leading-[22px] shrink-0">Notes &amp; Instructions</div>
      <div className="ml-[35px] h-full flex items-center shrink-0">
        <svg width="16" height="16" viewBox="0 0 16 16" className="block">
          <circle cx="8" cy="8" r="7.4" fill="none" stroke="#8a8a8a" />
          <path d="M8 4 V12 M4 8 H12" stroke="#666" strokeWidth="1.6" />
        </svg>
      </div>
      <div className="ml-[19px] h-full flex items-center shrink-0">
        <span className="block w-[2px] h-[10px] border-y-2 border-[#b5b5b5]" />
      </div>
      <div className="ml-[28px] mt-[6px] w-[510px] h-[15px] flex shrink-0">
        <div className="w-[15px] bg-white border border-[#a0a0a0] flex items-center justify-center shrink-0">
          <svg width="5" height="8" viewBox="0 0 5 8" className="block"><path d="M5 0 V8 L0 4 Z" fill="#444" /></svg>
        </div>
        <div className="w-[435px] bg-white border-y border-r border-[#a0a0a0] shrink-0" />
        <div className="flex-1 bg-[#f1f1f1]" />
        <div className="w-[14px] bg-white border border-[#a0a0a0] flex items-center justify-center shrink-0">
          <svg width="5" height="8" viewBox="0 0 5 8" className="block"><path d="M0 0 V8 L5 4 Z" fill="#444" /></svg>
        </div>
      </div>
    </div>
  );
}

function StatusBar() {
  return (
    <div className="h-[23px] bg-[#f1f1f1] border-t border-[#d2d2d2] flex items-center text-[11.5px] text-[#444]">
      <span className="ml-[12px]">Ready</span>
      <span className="ml-[15px]">Calculate</span>
      <svg width="13" height="13" viewBox="0 0 13 13" className="block ml-[21px]">
        <rect x="0.5" y="2.5" width="12" height="10" fill="#fff" stroke="#666" />
        <rect x="0" y="0" width="5" height="4" fill="#555" />
        <path d="M2 6 H11 M2 8.5 H11 M2 11 H11" stroke="#555" strokeDasharray="1.5 1" />
      </svg>
      <svg width="16" height="15" viewBox="0 0 16 15" className="block ml-[17px]">
        <path d="M7 1.5 A6 6 0 1 0 11 12" fill="none" stroke="#666" strokeDasharray="2 1" />
        <path d="M6 4 L15 13 M15 5 L7 13" stroke="#444" strokeWidth="1.4" />
      </svg>
      <span className="ml-[3px] font-semibold text-[11.2px] text-[#333]">Accessibility: Investigate</span>
      <div className="ml-auto flex items-center h-full">
        <div className="w-[39px] h-full bg-[#c6c6c6] flex items-center justify-center">
          <svg width="13" height="13" viewBox="0 0 13 13" className="block"><path d="M0.5 0.5 H12.5 V12.5 H0.5 Z M4.5 0.5 V12.5 M8.5 0.5 V12.5 M0.5 4.5 H12.5 M0.5 8.5 H12.5" fill="none" stroke="#666" /></svg>
        </div>
        <div className="w-[39px] flex justify-center">
          <svg width="13" height="13" viewBox="0 0 13 13" className="block"><path d="M0.5 0.5 H12.5 V12.5 H0.5 Z" fill="none" stroke="#666" /><path d="M3 3.5 H10 M3 6.5 H10 M3 9.5 H10" stroke="#666" /></svg>
        </div>
        <div className="w-[39px] flex justify-center">
          <svg width="13" height="13" viewBox="0 0 13 13" className="block"><path d="M0.5 0.5 H12.5 V12.5 H0.5 Z M0.5 8.5 H7.5 V0.5" fill="none" stroke="#666" /></svg>
        </div>
        <span className="block w-[7px] h-px bg-[#444] ml-[10px]" />
        <div className="relative w-[100px] h-px bg-[#444] ml-[5px]">
          <span className="absolute left-[48px] top-[-5px] w-[4px] h-[11px] bg-[#444]" />
        </div>
        <svg width="9" height="9" viewBox="0 0 9 9" className="block ml-[4px]"><path d="M4.5 0 V9 M0 4.5 H9" stroke="#444" /></svg>
        <span className="ml-[13px] mr-[7px] text-[11.5px]">100%</span>
      </div>
    </div>
  );
}

export default function App() {
  return (
    <div className="w-[1366px] h-[768px] overflow-hidden flex flex-col bg-[#217346] font-['Roboto','Noto_Sans',sans-serif] text-[12px]">
      <TitleBar />
      <TabRow />
      <Ribbon />
      <FormulaBar />
      <div className="h-[512px] flex text-[#222]">
        <div className="flex-1 min-w-0 flex flex-col">
          <ColumnHeaders />
          <div className="h-[494px] flex overflow-hidden">
            <RowHeaders />
            <Sheet />
          </div>
        </div>
        <VScroll />
      </div>
      <SheetTabs />
      <StatusBar />
    </div>
  );
}
